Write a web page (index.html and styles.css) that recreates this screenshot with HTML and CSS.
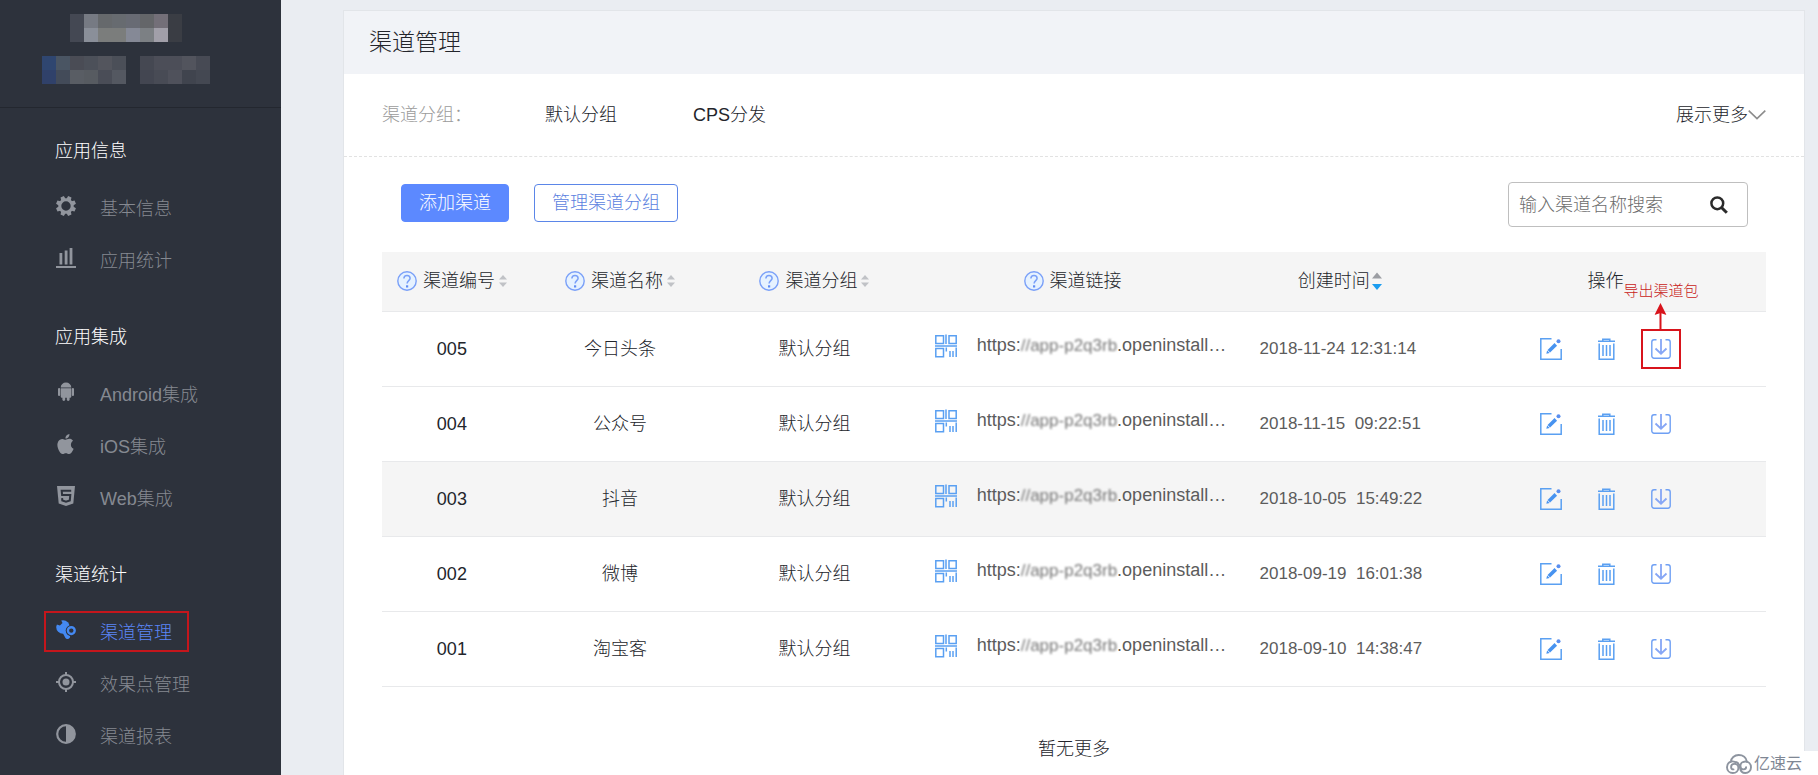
FILE: index.html
```html
<!DOCTYPE html>
<html lang="zh-CN">
<head>
<meta charset="utf-8">
<title>渠道管理</title>
<link rel="stylesheet" href="styles.css">
</head>
<body>
<svg class="defs" width="0" height="0" aria-hidden="true">
  <symbol id="i-help" viewBox="0 0 20 20"><circle cx="10" cy="10" r="9.2" fill="#e6f2ff" stroke="#7aa0f8" stroke-width="1.4"/><path d="M6.9 7.6C6.9 5.6 8.2 4.5 10 4.5s3.1 1.1 3.1 2.8c0 2.2-3 2.6-3 5.2" fill="none" stroke="#7aa0f8" stroke-width="1.5"/><rect x="9" y="14.3" width="2.2" height="2.2" fill="#5f8cf5"/></symbol>
  <symbol id="i-sort" viewBox="0 0 8 12"><path class="up" d="M0 4.5 4 0l4 4.500z"/><path class="down" d="M0 7.500h8L4 12z"/></symbol>
  <symbol id="i-qr" viewBox="0 0 22 24"><g fill="none" stroke="#5aa0f2" stroke-width="1.5"><path d="M.8 1.800h7.700v7.700H.8zM14 1.800h7.200v7.700H14zM.8 14.500h7.700v8.200H.8zM11 .500v9.500M0 12h22M11.300 13.500v4M15 17v6M18 17v6M21.200 13.500V23"/></g></symbol>
  <symbol id="i-edit" viewBox="0 0 22 22"><path d="M11.500.8H.8v20.400h20.400V11" fill="none" stroke="#5aa0f2" stroke-width="1.500"/><path d="m8.800 13.200 7-6.800" stroke="#4793f0" stroke-width="3.600"/><path d="m6.300 15.800.8-3.300 2.600 2.500z" fill="#4793f0"/><circle cx="18.500" cy="3.200" r="2" fill="#5a8ff0"/></symbol>
  <symbol id="i-trash" viewBox="0 0 17 22"><g fill="none" stroke="#5aa0f2" stroke-width="1.500"><path d="M0 3.300h17M4.800 3V1.200h7V3M1.200 5.500v15.700h14.600V5.500"/><path d="M5 7v11M8.500 7v11M12 7v11"/></g></symbol>
  <symbol id="i-down" viewBox="0 0 20 20"><g fill="none" stroke="#6fa0f4"><path d="M5.500.8H3A2.200 2.200 0 0 0 .8 3v14A2.200 2.200 0 0 0 3 19.200h14a2.200 2.200 0 0 0 2.200-2.200V3A2.200 2.200 0 0 0 17 .8h-2.500" stroke-width="1.400"/><path d="M10 0v14.500M4.500 9.500l5.500 5.200 5.500-5.200" stroke="#86a6f5" stroke-width="1.800"/></g></symbol>
</svg>
<div class="page">
  <aside class="sidebar">
    <div class="account">
      <svg width="168" height="70" viewBox="0 0 168 70" shape-rendering="crispEdges" aria-label="账号信息" role="img">
        <path fill="#444853" d="M28 0h14v28H28z"/><path fill="#767a83" d="M42 0h14v14H42z"/><path fill="#66696c" d="M56 0h14v14H56z"/><path fill="#676b70" d="M70 0h14v14H70z"/><path fill="#686b74" d="M84 0h14v14H84z"/><path fill="#646669" d="M98 0h14v14H98z"/><path fill="#736f78" d="M112 0h14v14h-14z"/><path fill="#3a3d44" d="M126 0h14v28h-14z"/>
        <path fill="#8a8f99" d="M42 14h14v14H42z"/><path fill="#7b7d7c" d="M56 14h28v14H56z"/><path fill="#858996" d="M84 14h14v14H84z"/><path fill="#7c8084" d="M98 14h14v14H98z"/><path fill="#a19fa9" d="M112 14h14v14h-14z"/>
        <path fill="#2f4670" d="M0 42h14v14H0z"/><path fill="#4a5563" d="M14 42h14v14H14z"/><path fill="#4a4c55" d="M28 42h14v14H28z"/><path fill="#4c5059" d="M42 42h14v14H42z"/><path fill="#53555d" d="M56 42h14v14H56z"/><path fill="#4b4f58" d="M70 42h14v14H70z"/><path fill="#454852" d="M98 42h14v14H98z"/><path fill="#4c4e58" d="M112 42h28v14h-28z"/><path fill="#52545d" d="M140 42h14v14h-14z"/><path fill="#474a54" d="M154 42h14v14h-14z"/>
        <path fill="#30416a" d="M0 56h14v14H0z"/><path fill="#434b59" d="M14 56h14v14H14z"/><path fill="#595d64" d="M28 56h14v14H28z"/><path fill="#575b61" d="M42 56h14v14H42z"/><path fill="#4a4d57" d="M56 56h14v14H56z"/><path fill="#545861" d="M70 56h14v14H70z"/><path fill="#434651" d="M98 56h14v14H98z"/><path fill="#484b55" d="M112 56h14v14h-14z"/><path fill="#4f515b" d="M126 56h14v14h-14z"/><path fill="#40444e" d="M140 56h14v14h-14z"/><path fill="#444852" d="M154 56h14v14h-14z"/>
      </svg>
    </div>
    <nav class="menu">
      <section class="menu-group">
        <h2>应用信息</h2>
        <ul>
          <li><a href="#"><svg class="icon" viewBox="0 0 20 20"><circle cx="10" cy="10" r="6.200" fill="none" stroke="currentColor" stroke-width="3"/><g fill="currentColor"><path d="M8.200 0h3.600l.6 4H7.600zM8.200 20h3.600l.6-4H7.600z" transform="rotate(22.500 10 10)"/><path d="M8.200 0h3.600l.6 4H7.600zM8.200 20h3.600l.6-4H7.600z" transform="rotate(67.500 10 10)"/><path d="M8.200 0h3.600l.6 4H7.600zM8.200 20h3.600l.6-4H7.600z" transform="rotate(112.500 10 10)"/><path d="M8.200 0h3.600l.6 4H7.600zM8.200 20h3.600l.6-4H7.600z" transform="rotate(157.500 10 10)"/></g></svg>基本信息</a></li>
          <li><a href="#"><svg class="icon" viewBox="0 0 20 20" fill="currentColor"><path d="M0 18h20v2H0zM3.500 5h2.800v11.500H3.500zM8.700 2.500h2.800v14H8.700zM13.600 0h2.800v16.500h-2.800z"/></svg>应用统计</a></li>
        </ul>
      </section>
      <section class="menu-group">
        <h2>应用集成</h2>
        <ul>
          <li><a href="#"><svg class="icon" viewBox="0 0 20 20" fill="currentColor"><path d="M4.700 5.600a5.300 5 0 0 1 10.600 0zM4.700 6.300h10.600v8.200a1.200 1.200 0 0 1-1.200 1.200H5.900a1.200 1.200 0 0 1-1.200-1.200z"/><rect x="2" y="6" width="2.200" height="8" rx="1.100"/><rect x="15.800" y="6" width="2.200" height="8" rx="1.100"/><rect x="6.400" y="13" width="2.800" height="6" rx="1.400"/><rect x="10.800" y="13" width="2.800" height="6" rx="1.400"/></svg>Android集成</a></li>
          <li><a href="#"><svg class="icon" viewBox="2.500 2 20 20" fill="currentColor"><path d="M18.710 19.500C17.880 20.740 17 21.950 15.660 21.970C14.320 22 13.890 21.180 12.370 21.180C10.840 21.180 10.370 21.950 9.100 22C7.790 22.050 6.800 20.680 5.960 19.470C4.250 17 2.940 12.450 4.700 9.390C5.570 7.870 7.130 6.910 8.820 6.880C10.100 6.860 11.320 7.750 12.110 7.750C12.890 7.750 14.370 6.680 15.920 6.840C16.570 6.870 18.390 7.100 19.560 8.820C19.470 8.880 17.390 10.100 17.410 12.630C17.440 15.650 20.060 16.660 20.090 16.670C20.060 16.740 19.670 18.110 18.710 19.500M13 3.500C13.730 2.670 14.940 2.040 15.940 2C16.070 3.170 15.600 4.350 14.900 5.190C14.210 6.040 13.070 6.700 11.950 6.610C11.800 5.460 12.360 4.260 13 3.500Z"/></svg>iOS集成</a></li>
          <li><a href="#"><svg class="icon" viewBox="0 0 20 20"><path fill="currentColor" d="M1 0h18l-1.700 17.600L10 20l-7.300-2.400z"/><path fill="none" stroke="#2d323c" stroke-width="2" d="M15.200 4.800H5.700l.4 4.300h8.200l-.5 5.300-3.800 1.200-3.700-1.200-.2-2.200"/></svg>Web集成</a></li>
        </ul>
      </section>
      <section class="menu-group">
        <h2>渠道统计</h2>
        <ul>
          <li class="current"><a href="#" aria-current="page"><svg class="icon" viewBox="0 0 20 20"><circle cx="7" cy="7" r="6.800" fill="currentColor"/><path d="m7 8 4.500 8.500" stroke="currentColor" stroke-width="5" stroke-linecap="round"/><path d="M0-1h4.500l2 4-2.600 2.600L-1 4z" fill="#2d323c"/><circle cx="15.300" cy="10.600" r="5.600" fill="#2d323c"/><circle cx="15.300" cy="10.600" r="3.400" fill="none" stroke="currentColor" stroke-width="2.400"/></svg>渠道管理</a></li>
          <li><a href="#"><svg class="icon" viewBox="0 0 20 20"><circle cx="10" cy="10" r="7" fill="none" stroke="currentColor" stroke-width="2"/><circle cx="10" cy="10" r="3.500" fill="currentColor"/><path d="M10 0v3M10 17v3M0 10h3M17 10h3" stroke="currentColor" stroke-width="2"/></svg>效果点管理</a></li>
          <li><a href="#"><svg class="icon" viewBox="0 0 20 20"><circle cx="10" cy="10" r="8.800" fill="none" stroke="currentColor" stroke-width="2.200"/><path d="M10 1a9 9 0 0 1 0 18z" fill="currentColor"/></svg>渠道报表</a></li>
        </ul>
      </section>
    </nav>
  </aside>

  <main class="main">
    <div class="card">
      <header class="card-head"><h1>渠道管理</h1></header>
      <div class="filters">
        <span class="filters-label">渠道分组：</span>
        <div class="filters-list">
          <a href="#">默认分组</a>
          <a href="#">CPS分发</a>
        </div>
        <button class="more" type="button">展示更多<svg width="18" height="10" viewBox="0 0 18 10"><path d="m.7.700 8.300 8 8.300-8" fill="none" stroke="#8c8c8c" stroke-width="1.600"/></svg></button>
      </div>
      <div class="content">
        <div class="toolbar">
          <button class="btn btn-primary" type="button">添加渠道</button>
          <button class="btn" type="button">管理渠道分组</button>
          <form class="search" role="search">
            <input type="text" placeholder="输入渠道名称搜索" aria-label="输入渠道名称搜索">
            <button type="button" aria-label="搜索"><svg width="18" height="18" viewBox="0 0 18 18" fill="none" stroke="#2b2b2b"><circle cx="7.300" cy="7.300" r="5.900" stroke-width="2.500"/><path d="m11.500 11.500 5.300 5.300" stroke-width="3"/></svg></button>
          </form>
        </div>
        <table class="channels">
          <colgroup><col class="c-id"><col class="c-name"><col class="c-group"><col class="c-link"><col class="c-time"><col class="c-ops"></colgroup>
          <thead>
            <tr>
              <th><span class="th"><svg class="help"><use href="#i-help"/></svg>渠道编号<svg class="sort"><use href="#i-sort"/></svg></span></th>
              <th><span class="th"><svg class="help"><use href="#i-help"/></svg>渠道名称<svg class="sort"><use href="#i-sort"/></svg></span></th>
              <th><span class="th"><svg class="help"><use href="#i-help"/></svg>渠道分组<svg class="sort"><use href="#i-sort"/></svg></span></th>
              <th><span class="th"><svg class="help"><use href="#i-help"/></svg>渠道链接</span></th>
              <th><span class="th">创建时间<svg class="sort sort-active" viewBox="0 0 10 18"><path fill="#9c9ea3" d="M0 6.500 5 .500l5 6z"/><path fill="#1b9df0" d="M0 12h10l-5 6z"/></svg></span></th>
              <th>操作</th>
            </tr>
          </thead>
          <tbody>
            <tr>
              <td>005</td><td>今日头条</td><td>默认分组</td>
              <td><div class="link"><svg class="qr"><use href="#i-qr"/></svg><span>https:<span class="masked">//app-p2q3rb</span>.openinstall…</span></div></td>
              <td class="time">2018-11-24 12<b>:</b>31<b>:</b>14</td>
              <td><div class="ops"><button type="button" aria-label="编辑"><svg class="edit"><use href="#i-edit"/></svg></button><button type="button" aria-label="删除"><svg class="trash"><use href="#i-trash"/></svg></button><button class="noted" type="button" aria-label="导出渠道包"><svg class="down"><use href="#i-down"/></svg><span class="note"><span>导出渠道包</span><svg width="12" height="26" viewBox="0 0 12 26"><path d="M6 6v20" stroke="#d8141c" stroke-width="2"/><path d="m6 0 6 12-6-2-6 2z" fill="#d8141c"/></svg></span></button></div></td>
            </tr>
            <tr>
              <td>004</td><td>公众号</td><td>默认分组</td>
              <td><div class="link"><svg class="qr"><use href="#i-qr"/></svg><span>https:<span class="masked">//app-p2q3rb</span>.openinstall…</span></div></td>
              <td class="time">2018-11-15&nbsp; 09<b>:</b>22<b>:</b>51</td>
              <td><div class="ops"><button type="button" aria-label="编辑"><svg class="edit"><use href="#i-edit"/></svg></button><button type="button" aria-label="删除"><svg class="trash"><use href="#i-trash"/></svg></button><button type="button" aria-label="导出渠道包"><svg class="down"><use href="#i-down"/></svg></button></div></td>
            </tr>
            <tr class="hovered">
              <td>003</td><td>抖音</td><td>默认分组</td>
              <td><div class="link"><svg class="qr"><use href="#i-qr"/></svg><span>https:<span class="masked">//app-p2q3rb</span>.openinstall…</span></div></td>
              <td class="time">2018-10-05&nbsp; 15<b>:</b>49<b>:</b>22</td>
              <td><div class="ops"><button type="button" aria-label="编辑"><svg class="edit"><use href="#i-edit"/></svg></button><button type="button" aria-label="删除"><svg class="trash"><use href="#i-trash"/></svg></button><button type="button" aria-label="导出渠道包"><svg class="down"><use href="#i-down"/></svg></button></div></td>
            </tr>
            <tr>
              <td>002</td><td>微博</td><td>默认分组</td>
              <td><div class="link"><svg class="qr"><use href="#i-qr"/></svg><span>https:<span class="masked">//app-p2q3rb</span>.openinstall…</span></div></td>
              <td class="time">2018-09-19&nbsp; 16<b>:</b>01<b>:</b>38</td>
              <td><div class="ops"><button type="button" aria-label="编辑"><svg class="edit"><use href="#i-edit"/></svg></button><button type="button" aria-label="删除"><svg class="trash"><use href="#i-trash"/></svg></button><button type="button" aria-label="导出渠道包"><svg class="down"><use href="#i-down"/></svg></button></div></td>
            </tr>
            <tr>
              <td>001</td><td>淘宝客</td><td>默认分组</td>
              <td><div class="link"><svg class="qr"><use href="#i-qr"/></svg><span>https:<span class="masked">//app-p2q3rb</span>.openinstall…</span></div></td>
              <td class="time">2018-09-10&nbsp; 14<b>:</b>38<b>:</b>47</td>
              <td><div class="ops"><button type="button" aria-label="编辑"><svg class="edit"><use href="#i-edit"/></svg></button><button type="button" aria-label="删除"><svg class="trash"><use href="#i-trash"/></svg></button><button type="button" aria-label="导出渠道包"><svg class="down"><use href="#i-down"/></svg></button></div></td>
            </tr>
          </tbody>
        </table>
        <p class="empty">暂无更多</p>
      </div>
    </div>
  </main>
  <div class="brand">
    <svg width="26" height="20" viewBox="0 0 26 20" fill="none" stroke="#8d949f" stroke-width="1.900" stroke-linecap="round"><path d="M4.800 8C5 3.800 8.500 1 12.700 1c4.300 0 7.600 2.600 8.200 6.700M9.500 8.200C4.600 5.700 1 9.300 1 13.200 1 16.600 3.600 19 6.800 19c3.300 0 5.600-2.200 5.600-5.100 0-2.400-1.800-4-4-4-1.900 0-3.300 1.300-3.300 3 0 1.500 1 2.500 2.400 2.500"/><path d="M10.500 8.200c1.900.9 3 2.500 3.500 5.600.5 3.300 2.400 5.200 5.300 5.200 3.200 0 5.700-2.500 5.700-5.800 0-3.400-2.500-5.700-5.600-5.700-2.900 0-5 1.900-5 4.400 0 2 1.400 3.500 3.200 3.500 1.500 0 2.500-1 2.500-2.300"/></svg>
    <span>亿速云</span>
  </div>
</div>
</body>
</html>
```
FILE: styles.css
```css
* { box-sizing: border-box; }

body {
  margin: 0;
  background: #eaedf2;
  color: #23252b;
  font-family: "Liberation Sans", "Noto Sans CJK SC", sans-serif;
  font-size: 18px;
  font-weight: 300;
  line-height: 24px;
}

h1, h2, p, ul { margin: 0; padding: 0; font-weight: inherit; }
ul { list-style: none; }
a { color: inherit; text-decoration: none; }
svg { display: block; flex: none; }
button { font: inherit; color: inherit; background: none; border: 0; padding: 0; cursor: pointer; }
.defs { position: absolute; }

.page { position: relative; display: flex; min-height: 100vh; overflow: hidden; }

/* Sidebar */
.sidebar { flex: none; width: 281px; background: #2d323c; }
.account { padding: 14px 42px 23px; border-bottom: 1px solid #23272f; }
.menu { display: flex; flex-direction: column; gap: 19px; padding-top: 12px; }
.menu-group h2 { padding: 19px 55px 20px; color: #fff; font-size: 18px; }
.menu-group li { position: relative; }
.menu-group a { display: flex; align-items: center; gap: 24px; height: 52px; padding-left: 56px; color: #858991; }
.icon { width: 20px; height: 20px; margin-bottom: 7px; color: #91959d; }
.menu-group .current a { color: #5b86f7; }
.current .icon { color: #4489f2; }
.current::after {
  content: "";
  position: absolute;
  inset: 4px 92px 7px 44px;
  border: 2px solid #c4161c;
  pointer-events: none;
}

/* Card */
.main { flex: 1; min-width: 0; display: flex; padding: 10px 13px 0 62px; }
.card { flex: 1; min-width: 0; background: #fff; border: 1px solid #e2e5e9; border-bottom: 0; }
.card-head { padding: 16px 25px 17px; background: #f1f3f7; }
.card-head h1 { font-size: 23px; line-height: 30px; }

.filters { display: flex; align-items: center; padding: 29px 38px; border-bottom: 1px dashed #e2e2e2; }
.filters-label { width: 163px; color: #9b9b9b; }
.filters-list { flex: 1; display: flex; gap: 76px; }
.more { display: flex; align-items: center; }

.content { padding: 25px 38px 15px; }
.toolbar { display: flex; align-items: center; gap: 25px; padding: 0 18px 0 19px; }
.btn { height: 38px; margin-bottom: 3px; padding: 0 17px; border: 1px solid #5b86e8; border-radius: 4px; color: #5b7fe0; }
.btn-primary { border-color: #5c89ff; background: #5c89ff; color: #fff; }
.search { display: flex; align-items: center; width: 240px; height: 45px; margin-left: auto; padding: 0 19px 0 10px; border: 1px solid #bfbfbf; border-radius: 4px; }
.search input { flex: 1; min-width: 0; padding: 0; border: 0; outline: 0; background: none; font: inherit; }
.search input::placeholder { color: #6c6c6c; opacity: 1; }

/* Table */
.channels { width: 100%; margin-top: 25px; border-collapse: collapse; table-layout: fixed; text-align: center; }
.c-id { width: 10.1%; }
.c-name { width: 14.2%; }
.c-group { width: 13.9%; }
.c-link { width: 23.4%; }
.c-time { width: 15.2%; }
.c-ops { width: 23.2%; }
.channels th, .channels td { padding: 0; font-weight: inherit; border-bottom: 1px solid #e8e9eb; white-space: nowrap; }
.channels th { height: 59px; background: #f5f5f5; }
.channels td { height: 75px; }
.hovered { background: #f5f5f5; }
.th { display: flex; align-items: center; justify-content: center; }
.help { width: 20px; height: 20px; margin-right: 6px; }
.sort { width: 8px; height: 12px; margin-left: 4px; fill: #c0c2c6; }
.sort-active { width: 10px; height: 18px; margin-left: 2px; }

.link { display: flex; align-items: center; gap: 20px; padding: 0 0 6px 24px; color: #5c5c5c; }
.qr { width: 22px; height: 24px; }
.masked { color: #777; font-size: 17px; filter: blur(1px); }
.channels .time { padding-left: 25px; text-align: left; color: #5c5c5c; font-size: 17px; }

.ops { display: flex; align-items: center; justify-content: center; gap: 36px; }
.edit { width: 22px; height: 22px; }
.trash { width: 17px; height: 22px; }
.down { width: 20px; height: 20px; }
.noted { position: relative; }
.noted::after { content: ""; position: absolute; inset: -10px; border: 2px solid #d8141c; }
.note {
  position: absolute;
  bottom: 30px;
  left: 50%;
  display: flex;
  flex-direction: column;
  align-items: center;
  color: #c81a20;
  font-size: 15px;
  transform: translateX(-50%);
}

.empty { padding-top: 50px; text-align: center; }

/* Brand mark in the corner */
.brand {
  position: absolute;
  right: 0;
  bottom: 0;
  display: flex;
  align-items: center;
  gap: 2px;
  padding: 1px 16px 0 10px;
  background: #fff;
  color: #7f8794;
  font-size: 16px;
  font-weight: 400;
}
```
